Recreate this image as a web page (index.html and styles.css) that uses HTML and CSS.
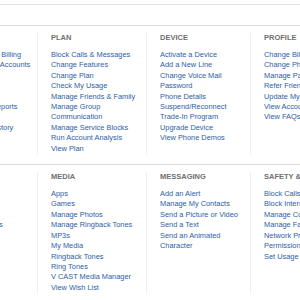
FILE: index.html
```html
<!DOCTYPE html>
<html>
  <head>
    <meta charset="utf-8" />
    <title>My Verizon Menu</title>
    <meta name="viewport" content="width=device-width, initial-scale=1" />
    <link rel="stylesheet" href="styles.css">
  </head>
  <body>
    <div class="topbar"></div>

    <div class="menu-section">
      <div class="menu-col">
        <h3>BILLING</h3>
        <ul>
          <li><a href="#">View Paper-Free Billing</a></li>
          <li><a href="#">Manage Multiple Accounts</a></li>
          <li><a href="#">Pay My Bill</a></li>
          <li><a href="#">View My Bill</a></li>
          <li><a href="#">Auto Pay</a></li>
          <li><a href="#">Create Usage Reports</a></li>
          <li><a href="#">My Bill</a></li>
          <li><a href="#">View Account History</a></li>
        </ul>
      </div>
      <div class="menu-col">
        <h3>PLAN</h3>
        <ul>
          <li><a href="#">Block Calls &amp; Messages</a></li>
          <li><a href="#">Change Features</a></li>
          <li><a href="#">Change Plan</a></li>
          <li><a href="#">Check My Usage</a></li>
          <li><a href="#">Manage Friends &amp; Family</a></li>
          <li><a href="#">Manage Group Communication</a></li>
          <li><a href="#">Manage Service Blocks</a></li>
          <li><a href="#">Run Account Analysis</a></li>
          <li><a href="#">View Plan</a></li>
        </ul>
      </div>
      <div class="menu-col">
        <h3>DEVICE</h3>
        <ul>
          <li><a href="#">Activate a Device</a></li>
          <li><a href="#">Add a New Line</a></li>
          <li><a href="#">Change Voice Mail Password</a></li>
          <li><a href="#">Phone Details</a></li>
          <li><a href="#">Suspend/Reconnect</a></li>
          <li><a href="#">Trade-In Program</a></li>
          <li><a href="#">Upgrade Device</a></li>
          <li><a href="#">View Phone Demos</a></li>
        </ul>
      </div>
      <div class="menu-col">
        <h3>PROFILE</h3>
        <ul>
          <li><a href="#">Change Billing Address</a></li>
          <li><a href="#">Change Phone Number</a></li>
          <li><a href="#">Manage Password</a></li>
          <li><a href="#">Refer Friends</a></li>
          <li><a href="#">Update My Profile</a></li>
          <li><a href="#">View Account Info</a></li>
          <li><a href="#">View FAQs</a></li>
        </ul>
      </div>
    </div>

    <div class="menu-section">
      <div class="menu-col">
        <h3>SHOP</h3>
        <ul>
          <li><a href="#">Phones</a></li>
          <li><a href="#">Plans</a></li>
          <li><a href="#">Deals</a></li>
          <li><a href="#">Shop Accessories</a></li>
        </ul>
      </div>
      <div class="menu-col">
        <h3>MEDIA</h3>
        <ul>
          <li><a href="#">Apps</a></li>
          <li><a href="#">Games</a></li>
          <li><a href="#">Manage Photos</a></li>
          <li><a href="#">Manage Ringback Tones</a></li>
          <li><a href="#">MP3s</a></li>
          <li><a href="#">My Media</a></li>
          <li><a href="#">Ringback Tones</a></li>
          <li><a href="#">Ring Tones</a></li>
          <li><a href="#">V CAST Media Manager</a></li>
          <li><a href="#">View Wish List</a></li>
        </ul>
      </div>
      <div class="menu-col">
        <h3>MESSAGING</h3>
        <ul>
          <li><a href="#">Add an Alert</a></li>
          <li><a href="#">Manage My Contacts</a></li>
          <li><a href="#">Send a Picture or Video</a></li>
          <li><a href="#">Send a Text</a></li>
          <li><a href="#">Send an Animated Character</a></li>
        </ul>
      </div>
      <div class="menu-col">
        <h3>SAFETY &amp; CONTROLS</h3>
        <ul>
          <li><a href="#">Block Calls &amp; Messages</a></li>
          <li><a href="#">Block Internet Access</a></li>
          <li><a href="#">Manage Content Filters</a></li>
          <li><a href="#">Manage FamilyBase</a></li>
          <li><a href="#">Network Protection</a></li>
          <li><a href="#">Permission Controls</a></li>
          <li><a href="#">Set Usage Controls</a></li>
        </ul>
      </div>
    </div>
  </body>
</html>
```

FILE: styles.css
```css
body {
  margin: 0;
  padding-top: 4px;
  font-family: "Liberation Sans", Arial, sans-serif;
  background-color: white;
  overflow: hidden;
}

.topbar {
  height: 20px;
  border-top: 1px solid #e2e2e2;
}

.menu-section {
  display: grid;
  grid-template-columns: 106px 109px 104px 106px;
  margin-left: -69px;
  padding: 7px 0 9px;
  border-top: 1px solid #dcdcdc;
}

.menu-col {
  padding: 0 0 1px 13px;
  border-left: 1px solid #f0f0f0;
  white-space: normal;
}

.menu-col:first-child {
  border-left: none;
}

.menu-col h3 {
  margin: 0 0 7px;
  font-size: 7.5px;
  line-height: 10px;
  font-weight: bold;
  color: #707070;
  white-space: nowrap;
}

.menu-col ul {
  list-style: none;
  margin: 0;
  padding: 0;
  width: 90px;
}

.menu-col li {
  font-size: 7.4px;
  line-height: 10.4px;
}

.menu-col a {
  color: #2c60a6;
  text-decoration: none;
}
```
